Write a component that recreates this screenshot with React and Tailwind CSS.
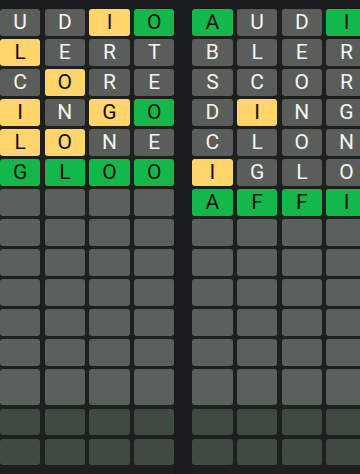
import React from "react";

const guesses = ["AUDIO", "BLERT", "SCORE", "DINGO", "CLONE", "IGLOO", "AFFIX"];

// g = green, y = yellow, x = gray
const boards = [
  { answer: "IGLOO", marks: ["xxxyg", "xyxxx", "xxyxx", "xyxyg", "xyyxx", "ggggg"] },
  { answer: "AFFIX", marks: ["gxxgx", "xxxxx", "xxxxx", "xyxxx", "xxxxx", "yxxxx", "ggggg"] },
];

const ROWS = 15;

const tileColor = {
  g: "bg-[#14b84a] text-[#111]",
  y: "bg-[#ffd56c] text-[#111]",
  x: "bg-[#595e5a] text-[#f4f4f4]",
};

const emptyRow = (i) => {
  if (i >= 13) return "bg-[#3f4a41]";
  return "bg-[#5a605b]";
};

const rowHeight = (i) => {
  if (i === 12) return "h-[36px]";
  if (i >= 13) return "h-[26px] mt-[1px]";
  return "h-[27px]";
};

const Board = ({ board, className }) => {
  return (
    <div className={`flex flex-col gap-[3px] w-[219px] shrink-0 bg-[#1c211d] ${className || ""}`}>
      {Array.from({ length: ROWS }).map((_, r) => {
        const mark = board.marks[r];
        return (
          <div key={r} className={`grid grid-cols-5 gap-x-[4.5px] ${rowHeight(r)}`}>
            {Array.from({ length: 5 }).map((_, c) => {
              if (!mark) {
                return <div key={c} className={`rounded-[3px] ${emptyRow(r)}`} />;
              }
              return (
                <div
                  key={c}
                  className={`rounded-[3px] flex items-center justify-center text-[21px] leading-none ${tileColor[mark[c]]}`}
                >
                  {guesses[r][c]}
                </div>
              );
            })}
          </div>
        );
      })}
    </div>
  );
};

export default function App() {
  return (
    <div
      className="w-[360px] h-[474px] overflow-hidden bg-[#1a1b1e] pt-[9px] flex gap-[18px]"
      style={{ fontFamily: "Roboto, 'Liberation Sans', sans-serif" }}
    >
      <Board board={boards[0]} className="-ml-[44.7px]" />
      <Board board={boards[1]} />
    </div>
  );
}
